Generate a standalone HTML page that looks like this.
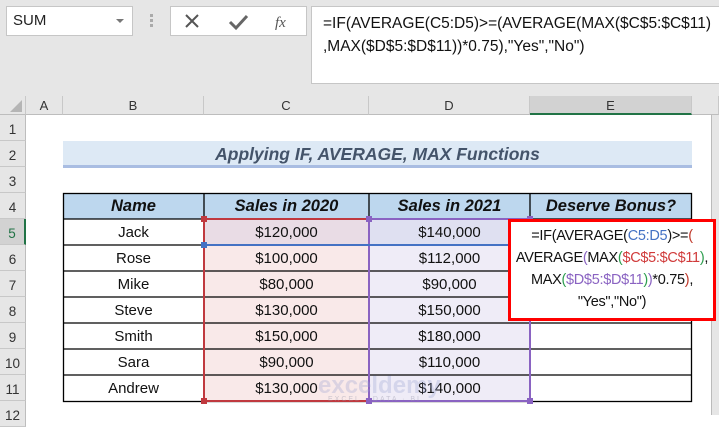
<!DOCTYPE html>
<html><head><meta charset="utf-8"><style>
*{margin:0;padding:0;box-sizing:border-box}
body{width:719px;height:415px;overflow:hidden;background:#fff;font-family:"Liberation Sans",sans-serif;position:relative}
.a{position:absolute}
.top{left:0;top:0;width:719px;height:96px;background:#e6e6e6}
.box{background:#fff;border:1px solid #c6c6c6}
.hdr{top:96px;height:19px;background:#e6e6e6;border-bottom:1px solid #bdbdbd;font-size:13px;color:#333;text-align:center;line-height:19px;border-right:1px solid #c8c8c8}
.rh{left:0;width:26px;background:#e6e6e6;border-bottom:1px solid #c8c8c8;border-right:1px solid #bdbdbd;font-size:13.5px;color:#333;text-align:center}
.c{font-size:15px;color:#111;text-align:center;line-height:27px;height:26px}
.th{font-size:16.5px;font-weight:bold;font-style:italic;text-align:center;line-height:27px;height:26px;color:#111}
</style></head><body>
<div class="a top"></div>
<div class="a box" style="left:6px;top:6px;width:127px;height:30px"></div>
<div class="a" style="left:13px;top:12px;font-size:15px;color:#222">SUM</div>
<div class="a" style="left:116px;top:19px;width:0;height:0;border-left:4px solid transparent;border-right:4px solid transparent;border-top:4px solid #777"></div>
<div class="a" style="left:150px;top:14px;width:3px;height:13px;border-left:3px dotted #aaa"></div>
<div class="a box" style="left:170px;top:6px;width:137px;height:30px"></div>
<svg class="a" style="left:170px;top:6px" width="137" height="30"><path d="M16 9 L28 21 M28 9 L16 21" stroke="#555" stroke-width="2"/><path d="M60 16 L66 22 L77 10" stroke="#666" stroke-width="3" fill="none"/><text x="105" y="21" font-family="Liberation Serif" font-style="italic" font-size="15" fill="#555">fx</text></svg>
<div class="a box" style="left:311px;top:6px;width:410px;height:78px"></div>
<div class="a" style="left:323px;top:12px;font-size:15.5px;color:#111;line-height:23px;white-space:nowrap">=IF(AVERAGE(C5:D5)&gt;=(AVERAGE(MAX($C$5:$C$11)<br>,MAX($D$5:$D$11))*0.75),"Yes","No")</div>
<div class="a hdr" style="left:0;width:26px"><svg width="26" height="19"><path d="M22 4 L22 16 L10 16 Z" fill="#b5b5b5"/></svg></div>
<div class="a hdr" style="left:26px;width:37px">A</div>
<div class="a hdr" style="left:63px;width:141px">B</div>
<div class="a hdr" style="left:204px;width:165px">C</div>
<div class="a hdr" style="left:369px;width:161px">D</div>
<div class="a hdr" style="left:530px;width:162px;background:#d2d2d2;border-bottom:2px solid #217346">E</div>
<div class="a hdr" style="left:692px;width:27px"></div>
<div class="a" style="left:711px;top:115px;width:8px;height:300px;background:#e6e6e6;border-left:1px solid #bbb"></div>
<div class="a rh" style="top:115px;height:26px;line-height:30px">1</div>
<div class="a rh" style="top:141px;height:26px;line-height:30px">2</div>
<div class="a rh" style="top:167px;height:26px;line-height:30px">3</div>
<div class="a rh" style="top:193px;height:26px;line-height:30px">4</div>
<div class="a rh" style="top:219px;height:26px;line-height:30px;background:#d2d2d2;color:#217346;border-right:2px solid #217346">5</div>
<div class="a rh" style="top:245px;height:26px;line-height:30px">6</div>
<div class="a rh" style="top:271px;height:26px;line-height:30px">7</div>
<div class="a rh" style="top:297px;height:26px;line-height:30px">8</div>
<div class="a rh" style="top:323px;height:26px;line-height:30px">9</div>
<div class="a rh" style="top:349px;height:26px;line-height:30px">10</div>
<div class="a rh" style="top:375px;height:26px;line-height:30px">11</div>
<div class="a rh" style="top:401px;height:26px;line-height:30px">12</div>
<div class="a" style="left:63px;top:141px;width:629px;height:27px;background:#dde9f5;border-bottom:3px solid #a9bde2;text-align:center;font-size:17.5px;font-weight:bold;font-style:italic;color:#44546a;line-height:27px">Applying IF, AVERAGE, MAX Functions</div>
<div class="a" style="left:204px;top:219px;width:165px;height:182px;background:#f9e9e9"></div>
<div class="a" style="left:204px;top:219px;width:165px;height:26px;background:#e9dce5"></div>
<div class="a" style="left:369px;top:219px;width:161px;height:182px;background:#efecf7"></div>
<div class="a" style="left:369px;top:219px;width:161px;height:26px;background:#dfe0f1"></div>
<div class="a" style="left:63px;top:193px;width:629px;height:26px;background:#bdd7ee"></div>
<svg class="a" style="left:0;top:0" width="719" height="415">
<g stroke="#000" stroke-width="1.3" fill="none">
<rect x="63.5" y="193.5" width="628" height="208"/>
<path d="M204 193V401M369 193V401M530 193V401"/>
<path d="M63 219H692M63 245H692M63 271H692M63 297H692M63 323H692M63 349H692M63 375H692"/>
</g>
<rect x="204" y="219" width="165" height="182" fill="none" stroke="#c0393f" stroke-width="2"/>
<rect x="369" y="219" width="161" height="182" fill="none" stroke="#8a63c2" stroke-width="2"/>
<path d="M204 245H369" stroke="#4472c4" stroke-width="2"/>
<path d="M369 245H508" stroke="#4472c4" stroke-width="2"/>
<rect x="201" y="216" width="6" height="6" fill="#c0393f"/><rect x="201" y="398" width="6" height="6" fill="#c0393f"/>
<rect x="366" y="216" width="6" height="6" fill="#8a63c2"/><rect x="366" y="398" width="6" height="6" fill="#8a63c2"/>
<rect x="527" y="216" width="6" height="6" fill="#8a63c2"/><rect x="527" y="398" width="6" height="6" fill="#8a63c2"/>
<rect x="201" y="242" width="6" height="6" fill="#4472c4"/>
</svg>
<div class="a th" style="left:63px;top:193px;width:141px">Name</div>
<div class="a th" style="left:204px;top:193px;width:165px">Sales in 2020</div>
<div class="a th" style="left:369px;top:193px;width:161px">Sales in 2021</div>
<div class="a th" style="left:530px;top:193px;width:162px">Deserve Bonus?</div>
<div class="a" style="left:63px;top:219px;width:141px">
<div class="c">Jack</div><div class="c">Rose</div><div class="c">Mike</div><div class="c">Steve</div><div class="c">Smith</div><div class="c">Sara</div><div class="c">Andrew</div></div>
<div class="a" style="left:204px;top:219px;width:165px">
<div class="c">$120,000</div><div class="c">$100,000</div><div class="c">$80,000</div><div class="c">$130,000</div><div class="c">$150,000</div><div class="c">$90,000</div><div class="c">$130,000</div></div>
<div class="a" style="left:369px;top:219px;width:161px">
<div class="c">$140,000</div><div class="c">$112,000</div><div class="c">$90,000</div><div class="c">$150,000</div><div class="c">$180,000</div><div class="c">$110,000</div><div class="c">$140,000</div></div>
<div class="a" style="left:318px;top:372px;font-size:24px;font-weight:bold;color:rgba(150,160,210,0.3)">exceldemy</div>
<div class="a" style="left:328px;top:396px;font-size:7px;letter-spacing:2px;color:rgba(150,150,170,0.45)">EXCEL · DATA · BI</div>
<div class="a" style="left:508px;top:219px;width:208px;height:102px;background:#fff;border:3px solid #ff0000;text-align:center;font-size:14.5px;line-height:22px;padding-top:3px;color:#111;white-space:nowrap;letter-spacing:-0.3px">=IF(AVERAGE(<span style="color:#4472c4">C5:D5</span>)&gt;=<span style="color:#c0392b">(</span><br>AVERAGE<span style="color:#8a63c2">(</span>MAX<span style="color:#2e9e4f">(</span><span style="color:#d03a3a">$C$5:$C$11</span><span style="color:#2e9e4f">)</span>,<br>MAX<span style="color:#2e9e4f">(</span><span style="color:#8a63c2">$D$5:$D$11</span><span style="color:#2e9e4f">)</span><span style="color:#8a63c2">)</span>*0.75<span style="color:#c0392b">)</span>,<br>"Yes","No")</div>
</body></html>
